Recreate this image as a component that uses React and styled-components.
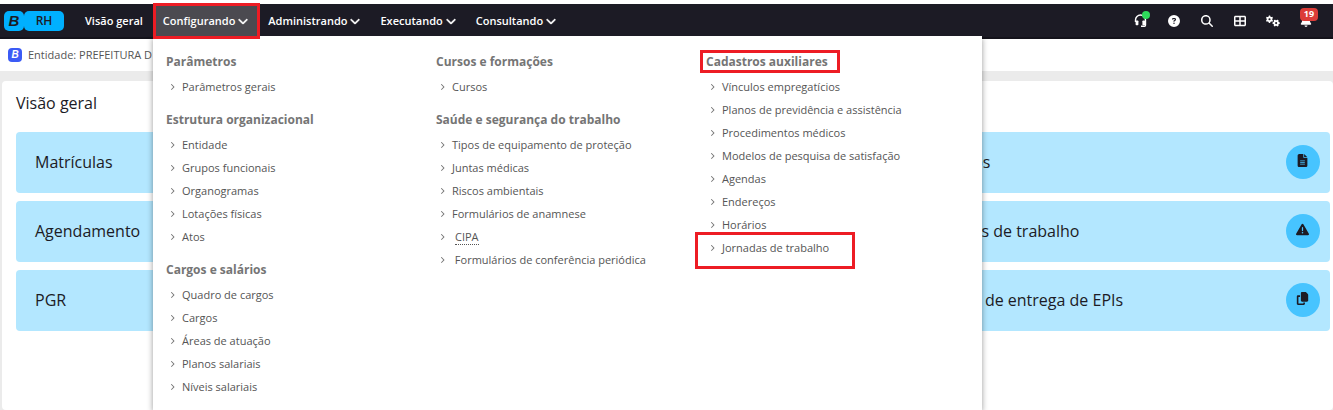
import React from 'react'
import styled, { createGlobalStyle } from 'styled-components'
import {
    FaAngleRight,
    FaBell,
    FaChevronDown,
    FaCircleQuestion,
    FaCopy,
    FaFileLines,
    FaGears,
    FaMagnifyingGlass,
    FaTableCellsLarge,
    FaTriangleExclamation,
} from 'react-icons/fa6'

const GlobalStyle = createGlobalStyle`
* {
    box-sizing: border-box;
}

body {
    margin: 0;
    background-color: #ebebeb;
    font-family: "Open Sans", "Noto Sans", sans-serif;
    color: #1c1b25;
}
`

const Page = styled.div`
display: flex;
flex-direction: column;
min-height: 100vh;
border-top: 4px solid white;
`

const Navbar = styled.header`
position: relative;
z-index: 2;
display: flex;
align-items: center;
justify-content: space-between;
height: 35px;
padding: 0px 11px 0px 4px;
background-color: #1c1b25;
border-bottom: 2px solid #14131b;
`

const Left = styled.div`
display: flex;
align-items: center;
`

const Logo = styled.a`
display: flex;
margin-right: 11px;
color: #1c1b25;
text-decoration: none;
`

const BrandMark = styled.span`
width: ${(props) => props.$size};
height: ${(props) => props.$size};
border-radius: ${(props) => (props.$light ? '4px' : '5px')};
background-color: ${(props) => (props.$light ? '#3b5bf5' : '#00b0ff')};
color: ${(props) => (props.$light ? 'white' : '#1c1b25')};
font-family: "Liberation Sans", Arial, sans-serif;
font-size: ${(props) => (props.$light ? '10px' : '15px')};
font-style: italic;
font-weight: 700;
line-height: ${(props) => props.$size};
text-align: center;
`

const LogoName = styled.span`
width: 40px;
height: 20px;
border-radius: 5px;
background-color: #00b0ff;
font-size: 12px;
font-weight: 600;
line-height: 20px;
text-align: center;
`

const Nav = styled.nav`
display: flex;
`

const NavItem = styled.button`
position: relative;
display: flex;
align-items: center;
gap: 3px;
height: 33px;
padding: 0px 10px;
border: none;
background-color: ${(props) => (props.$active ? '#4b4a50' : 'transparent')};
color: white;
font-family: inherit;
font-size: 11px;
font-weight: 600;
cursor: pointer;

svg {
    font-size: 10px;
    stroke: white;
    stroke-width: 30px;
}
`

const Tools = styled.div`
display: flex;
`

const Tool = styled.button`
position: relative;
display: flex;
align-items: center;
justify-content: center;
width: 33px;
height: 33px;
padding: 0px;
border: none;
background: none;
color: white;
font-size: ${(props) => (props.$large ? '14px' : '12px')};
cursor: pointer;
`

const StatusDot = styled.span`
position: absolute;
top: 7px;
right: 7px;
width: 8px;
height: 8px;
border-radius: 50%;
background-color: #2edb5b;
`

const Badge = styled.span`
position: absolute;
top: 4px;
right: 4px;
width: 18px;
height: 13px;
border-radius: 4px;
background-color: #dc3c38;
font-family: "Open Sans", sans-serif;
font-size: 9px;
font-weight: 700;
line-height: 12px;
`

const Highlight = styled.span`
position: absolute;
z-index: 3;
inset: ${(props) => props.$inset};
border: 3px solid #ed1c24;
pointer-events: none;
`

const Menu = styled.div`
position: absolute;
top: 32px;
left: 153px;
display: grid;
grid-template-columns: repeat(3, 270px);
min-height: calc(100vh - 36px);
padding: 15px 6px 0px 13px;
background-color: white;
box-shadow: 0px 2px 6px rgba(0, 0, 0, 0.4);
clip-path: inset(0px -8px 0px -8px);
`

const Group = styled.section`
margin-bottom: 11px;
`

const GroupTitle = styled.h2`
position: relative;
margin: 0px 0px 3px;
color: #757575;
font-size: 12px;
font-weight: 700;
line-height: 21px;
`

const Links = styled.ul`
margin: 0px;
padding: 0px;
list-style: none;
`

const LinkItem = styled.li`
position: relative;
height: 23px;
padding-left: 4px;
`

const MenuLink = styled.a`
display: flex;
align-items: center;
gap: 7px;
height: 23px;
color: #555555;
font-size: 11px;
line-height: 15px;
text-decoration: none;
white-space: pre;

svg {
    width: 5px;
    height: 8px;
    color: #777777;
}
`

const Abbr = styled.abbr`
margin-left: 3px;
border-bottom: 1px dotted #555555;
text-decoration: none;
`

const EntityBar = styled.div`
display: flex;
align-items: center;
gap: 6px;
height: 32px;
padding: 0px 8px 1px;
background-color: white;
color: #555555;
font-size: 11px;
`

const Panel = styled.main`
flex: 1;
margin: 10px 0px 0px 2px;
padding: 10px 3px 10px 14px;
border-radius: 4px;
background-color: white;
`

const PanelTitle = styled.h1`
margin: 0px 0px 17px;
font-size: 16px;
font-weight: 400;
line-height: 24px;
`

const Cards = styled.div`
display: grid;
grid-template-columns: repeat(3, 1fr);
gap: 8px;
`

const Card = styled.a`
grid-column: ${(props) => props.$column};
display: flex;
align-items: center;
justify-content: space-between;
height: 61px;
padding: 0px 10px 1px 19px;
border-radius: 4px;
background-color: #b3e7ff;
color: #1c1b25;
font-size: 16px;
text-decoration: none;
`

const CardIcon = styled.span`
display: flex;
align-items: center;
justify-content: center;
width: 34px;
height: 34px;
padding-bottom: 3px;
border-radius: 50%;
background-color: #47c4ff;
font-size: 13px;
`

const navItems = ['Administrando', 'Executando', 'Consultando']

const menu = [
    [
        { title: 'Parâmetros', links: ['Parâmetros gerais'] },
        {
            title: 'Estrutura organizacional',
            links: ['Entidade', 'Grupos funcionais', 'Organogramas', 'Lotações físicas', 'Atos'],
        },
        {
            title: 'Cargos e salários',
            links: ['Quadro de cargos', 'Cargos', 'Áreas de atuação', 'Planos salariais', 'Níveis salariais'],
        },
    ],
    [
        { title: 'Cursos e formações', links: ['Cursos'] },
        {
            title: 'Saúde e segurança do trabalho',
            links: [
                'Tipos de equipamento de proteção',
                'Juntas médicas',
                'Riscos ambientais',
                'Formulários de anamnese',
                'CIPA',
                ' Formulários de conferência periódica',
            ],
        },
    ],
    [
        {
            title: 'Cadastros auxiliares',
            marked: true,
            links: [
                'Vínculos empregatícios',
                'Planos de previdência e assistência',
                'Procedimentos médicos',
                'Modelos de pesquisa de satisfação',
                'Agendas',
                'Endereços',
                'Horários',
                'Jornadas de trabalho',
            ],
        },
    ],
]

const cards = [
    { title: 'Matrículas', column: 1 },
    { title: 'Atestados', column: 3, icon: <FaFileLines /> },
    { title: 'Agendamento', column: 1 },
    { title: 'Acidentes de trabalho', column: 3, icon: <FaTriangleExclamation /> },
    { title: 'PGR', column: 1 },
    { title: 'Controle de entrega de EPIs', column: 3, icon: <FaCopy /> },
]

const Headset = () => (
    <svg width="13" height="13" viewBox="0 0 13 13" fill="none">
        <path d="M1.5 8V6a5 5 0 0 1 10 0v5.2q0 1-1 1H7" stroke="white" strokeWidth="1.4" />
        <rect x="1.6" y="6.5" width="2.8" height="4.8" rx="0.8" fill="white" />
        <rect x="8.4" y="6.5" width="2.8" height="4.8" rx="0.8" fill="white" />
    </svg>
)

const App = () => {
    return (
        <Page>
            <GlobalStyle />
            <Navbar>
                <Left>
                    <Logo href="#">
                        <BrandMark $size="20px">B</BrandMark>
                        <LogoName>RH</LogoName>
                    </Logo>
                    <Nav>
                        <NavItem>Visão geral</NavItem>
                        <NavItem $active aria-expanded="true">
                            Configurando <FaChevronDown />
                            <Highlight $inset="-1px -2px -2px 0px" />
                        </NavItem>
                        {navItems.map((item) => (
                            <NavItem key={item}>
                                {item} <FaChevronDown />
                            </NavItem>
                        ))}
                    </Nav>
                </Left>

                <Tools>
                    <Tool aria-label="Suporte"><Headset /><StatusDot /></Tool>
                    <Tool aria-label="Ajuda"><FaCircleQuestion /></Tool>
                    <Tool aria-label="Buscar"><FaMagnifyingGlass /></Tool>
                    <Tool aria-label="Aplicativos"><FaTableCellsLarge /></Tool>
                    <Tool aria-label="Configurações" $large><FaGears /></Tool>
                    <Tool aria-label="Notificações"><FaBell /><Badge>19</Badge></Tool>
                </Tools>

                <Menu>
                    {menu.map((column, i) => (
                        <div key={i}>
                            {column.map((group) => (
                                <Group key={group.title}>
                                    <GroupTitle>
                                        {group.title}
                                        {group.marked && <Highlight $inset="-1px 136px -1px -6px" />}
                                    </GroupTitle>
                                    <Links>
                                        {group.links.map((link) => (
                                            <LinkItem key={link}>
                                                <MenuLink href="#">
                                                    <FaAngleRight />
                                                    {link === 'CIPA' ? <Abbr>{link}</Abbr> : link}
                                                </MenuLink>
                                                {link === 'Jornadas de trabalho' && (
                                                    <Highlight $inset="-4px 121px -10px -11px" />
                                                )}
                                            </LinkItem>
                                        ))}
                                    </Links>
                                </Group>
                            ))}
                        </div>
                    ))}
                </Menu>
            </Navbar>

            <EntityBar>
                <BrandMark $size="14px" $light>B</BrandMark>
                Entidade: PREFEITURA D
            </EntityBar>

            <Panel>
                <PanelTitle>Visão geral</PanelTitle>
                <Cards>
                    {cards.map((card) => (
                        <Card href="#" key={card.title} $column={card.column}>
                            {card.title}
                            {card.icon && <CardIcon>{card.icon}</CardIcon>}
                        </Card>
                    ))}
                </Cards>
            </Panel>
        </Page>
    )
}

export default App
